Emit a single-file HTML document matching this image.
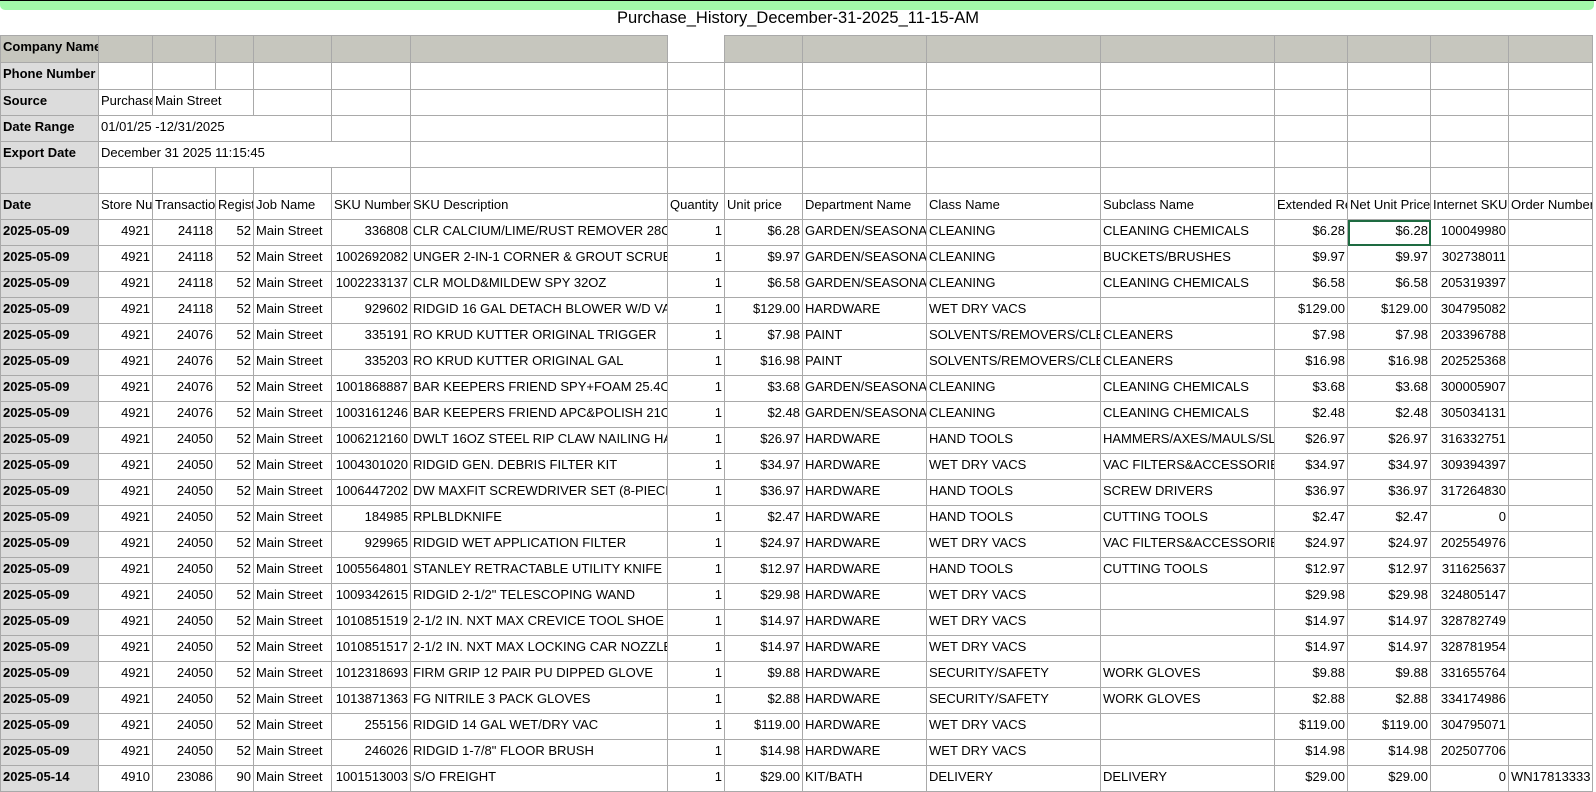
<!DOCTYPE html>
<html><head><meta charset="utf-8"><style>
body{margin:0;width:1596px;height:788px;overflow:hidden;background:#fff;font-family:"Liberation Sans",Arial,sans-serif;position:relative}
.bar{position:absolute;left:0;top:0;width:1596px;height:1px;background:#000}
.green{position:absolute;left:0;top:1px;width:1594px;height:9px;background:#a2f9aa;border-radius:0 0 5px 5px}
.title{position:absolute;left:0;width:1596px;top:9px;text-align:center;font-size:16.5px;color:#000}
table{position:absolute;left:0;top:35px;border-collapse:collapse;table-layout:fixed;width:1593px}
td{border:1px solid #a9a9a9;font-size:13px;padding:0 2px;white-space:nowrap;overflow:hidden;text-overflow:clip;vertical-align:top;line-height:15px;padding-top:3px;box-sizing:border-box;height:26px;color:#000}
td:first-child{background:#dcdcdc;font-weight:bold;border-right:1px dotted #333}
tr.top td{background:#c6c6be;border-bottom:1px dotted #533;height:27px}
tr.top td.gap{background:#fff;border-top:none;border-bottom:1px dotted #533}
tr.h2 td{height:27px}
.r{text-align:right}
.sel{outline:2px solid #1e6b41;outline-offset:-2px;position:relative}
</style></head><body>
<div class="bar"></div><div class="green"></div>
<div class="title">Purchase_History_December-31-2025_11-15-AM</div>
<table>
<colgroup><col style="width:98px"><col style="width:54px"><col style="width:63px"><col style="width:38px"><col style="width:78px"><col style="width:79px"><col style="width:257px"><col style="width:57px"><col style="width:78px"><col style="width:124px"><col style="width:174px"><col style="width:174px"><col style="width:73px"><col style="width:83px"><col style="width:78px"><col style="width:84px"></colgroup>
<tr class="top"><td>Company Name</td><td></td><td></td><td></td><td></td><td></td><td></td><td class="gap"></td><td></td><td></td><td></td><td></td><td></td><td></td><td></td><td></td></tr>
<tr class="h2"><td>Phone Number</td><td></td><td></td><td></td><td></td><td></td><td></td><td></td><td></td><td></td><td></td><td></td><td></td><td></td><td></td><td></td></tr>
<tr><td>Source</td><td>Purchase</td><td colspan="2">Main Street</td><td></td><td></td><td></td><td></td><td></td><td></td><td></td><td></td><td></td><td></td><td></td><td></td></tr>
<tr><td>Date Range</td><td colspan="4">01/01/25 -12/31/2025</td><td></td><td></td><td></td><td></td><td></td><td></td><td></td><td></td><td></td><td></td><td></td></tr>
<tr><td>Export Date</td><td colspan="5">December 31 2025 11:15:45</td><td></td><td></td><td></td><td></td><td></td><td></td><td></td><td></td><td></td><td></td></tr>
<tr><td></td><td></td><td></td><td></td><td></td><td></td><td></td><td></td><td></td><td></td><td></td><td></td><td></td><td></td><td></td><td></td></tr>
<tr><td>Date</td><td>Store Number</td><td>Transaction</td><td>Register</td><td>Job Name</td><td>SKU Number</td><td>SKU Description</td><td>Quantity</td><td>Unit price</td><td>Department Name</td><td>Class Name</td><td>Subclass Name</td><td>Extended Retail</td><td>Net Unit Price</td><td>Internet SKU</td><td>Order Number</td></tr>
<tr><td>2025-05-09</td><td class="r">4921</td><td class="r">24118</td><td class="r">52</td><td>Main Street</td><td class="r">336808</td><td>CLR CALCIUM/LIME/RUST REMOVER 28OZ</td><td class="r">1</td><td class="r">$6.28</td><td>GARDEN/SEASONAL</td><td>CLEANING</td><td>CLEANING CHEMICALS</td><td class="r">$6.28</td><td class="r sel">$6.28</td><td class="r">100049980</td><td></td></tr>
<tr><td>2025-05-09</td><td class="r">4921</td><td class="r">24118</td><td class="r">52</td><td>Main Street</td><td class="r">1002692082</td><td>UNGER 2-IN-1 CORNER &amp; GROUT SCRUBBER</td><td class="r">1</td><td class="r">$9.97</td><td>GARDEN/SEASONAL</td><td>CLEANING</td><td>BUCKETS/BRUSHES</td><td class="r">$9.97</td><td class="r">$9.97</td><td class="r">302738011</td><td></td></tr>
<tr><td>2025-05-09</td><td class="r">4921</td><td class="r">24118</td><td class="r">52</td><td>Main Street</td><td class="r">1002233137</td><td>CLR MOLD&amp;MILDEW SPY 32OZ</td><td class="r">1</td><td class="r">$6.58</td><td>GARDEN/SEASONAL</td><td>CLEANING</td><td>CLEANING CHEMICALS</td><td class="r">$6.58</td><td class="r">$6.58</td><td class="r">205319397</td><td></td></tr>
<tr><td>2025-05-09</td><td class="r">4921</td><td class="r">24118</td><td class="r">52</td><td>Main Street</td><td class="r">929602</td><td>RIDGID 16 GAL DETACH BLOWER W/D VAC</td><td class="r">1</td><td class="r">$129.00</td><td>HARDWARE</td><td>WET DRY VACS</td><td></td><td class="r">$129.00</td><td class="r">$129.00</td><td class="r">304795082</td><td></td></tr>
<tr><td>2025-05-09</td><td class="r">4921</td><td class="r">24076</td><td class="r">52</td><td>Main Street</td><td class="r">335191</td><td>RO KRUD KUTTER ORIGINAL TRIGGER</td><td class="r">1</td><td class="r">$7.98</td><td>PAINT</td><td>SOLVENTS/REMOVERS/CLEANERS</td><td>CLEANERS</td><td class="r">$7.98</td><td class="r">$7.98</td><td class="r">203396788</td><td></td></tr>
<tr><td>2025-05-09</td><td class="r">4921</td><td class="r">24076</td><td class="r">52</td><td>Main Street</td><td class="r">335203</td><td>RO KRUD KUTTER ORIGINAL GAL</td><td class="r">1</td><td class="r">$16.98</td><td>PAINT</td><td>SOLVENTS/REMOVERS/CLEANERS</td><td>CLEANERS</td><td class="r">$16.98</td><td class="r">$16.98</td><td class="r">202525368</td><td></td></tr>
<tr><td>2025-05-09</td><td class="r">4921</td><td class="r">24076</td><td class="r">52</td><td>Main Street</td><td class="r">1001868887</td><td>BAR KEEPERS FRIEND SPY+FOAM 25.4OZ</td><td class="r">1</td><td class="r">$3.68</td><td>GARDEN/SEASONAL</td><td>CLEANING</td><td>CLEANING CHEMICALS</td><td class="r">$3.68</td><td class="r">$3.68</td><td class="r">300005907</td><td></td></tr>
<tr><td>2025-05-09</td><td class="r">4921</td><td class="r">24076</td><td class="r">52</td><td>Main Street</td><td class="r">1003161246</td><td>BAR KEEPERS FRIEND APC&amp;POLISH 21OZ</td><td class="r">1</td><td class="r">$2.48</td><td>GARDEN/SEASONAL</td><td>CLEANING</td><td>CLEANING CHEMICALS</td><td class="r">$2.48</td><td class="r">$2.48</td><td class="r">305034131</td><td></td></tr>
<tr><td>2025-05-09</td><td class="r">4921</td><td class="r">24050</td><td class="r">52</td><td>Main Street</td><td class="r">1006212160</td><td>DWLT 16OZ STEEL RIP CLAW NAILING HAMMER</td><td class="r">1</td><td class="r">$26.97</td><td>HARDWARE</td><td>HAND TOOLS</td><td>HAMMERS/AXES/MAULS/SLEDGES</td><td class="r">$26.97</td><td class="r">$26.97</td><td class="r">316332751</td><td></td></tr>
<tr><td>2025-05-09</td><td class="r">4921</td><td class="r">24050</td><td class="r">52</td><td>Main Street</td><td class="r">1004301020</td><td>RIDGID GEN. DEBRIS FILTER KIT</td><td class="r">1</td><td class="r">$34.97</td><td>HARDWARE</td><td>WET DRY VACS</td><td>VAC FILTERS&amp;ACCESSORIES</td><td class="r">$34.97</td><td class="r">$34.97</td><td class="r">309394397</td><td></td></tr>
<tr><td>2025-05-09</td><td class="r">4921</td><td class="r">24050</td><td class="r">52</td><td>Main Street</td><td class="r">1006447202</td><td>DW MAXFIT SCREWDRIVER SET (8-PIECE)</td><td class="r">1</td><td class="r">$36.97</td><td>HARDWARE</td><td>HAND TOOLS</td><td>SCREW DRIVERS</td><td class="r">$36.97</td><td class="r">$36.97</td><td class="r">317264830</td><td></td></tr>
<tr><td>2025-05-09</td><td class="r">4921</td><td class="r">24050</td><td class="r">52</td><td>Main Street</td><td class="r">184985</td><td>RPLBLDKNIFE</td><td class="r">1</td><td class="r">$2.47</td><td>HARDWARE</td><td>HAND TOOLS</td><td>CUTTING TOOLS</td><td class="r">$2.47</td><td class="r">$2.47</td><td class="r">0</td><td></td></tr>
<tr><td>2025-05-09</td><td class="r">4921</td><td class="r">24050</td><td class="r">52</td><td>Main Street</td><td class="r">929965</td><td>RIDGID WET APPLICATION FILTER</td><td class="r">1</td><td class="r">$24.97</td><td>HARDWARE</td><td>WET DRY VACS</td><td>VAC FILTERS&amp;ACCESSORIES</td><td class="r">$24.97</td><td class="r">$24.97</td><td class="r">202554976</td><td></td></tr>
<tr><td>2025-05-09</td><td class="r">4921</td><td class="r">24050</td><td class="r">52</td><td>Main Street</td><td class="r">1005564801</td><td>STANLEY RETRACTABLE UTILITY KNIFE</td><td class="r">1</td><td class="r">$12.97</td><td>HARDWARE</td><td>HAND TOOLS</td><td>CUTTING TOOLS</td><td class="r">$12.97</td><td class="r">$12.97</td><td class="r">311625637</td><td></td></tr>
<tr><td>2025-05-09</td><td class="r">4921</td><td class="r">24050</td><td class="r">52</td><td>Main Street</td><td class="r">1009342615</td><td>RIDGID 2-1/2" TELESCOPING WAND</td><td class="r">1</td><td class="r">$29.98</td><td>HARDWARE</td><td>WET DRY VACS</td><td></td><td class="r">$29.98</td><td class="r">$29.98</td><td class="r">324805147</td><td></td></tr>
<tr><td>2025-05-09</td><td class="r">4921</td><td class="r">24050</td><td class="r">52</td><td>Main Street</td><td class="r">1010851519</td><td>2-1/2 IN. NXT MAX CREVICE TOOL SHOE</td><td class="r">1</td><td class="r">$14.97</td><td>HARDWARE</td><td>WET DRY VACS</td><td></td><td class="r">$14.97</td><td class="r">$14.97</td><td class="r">328782749</td><td></td></tr>
<tr><td>2025-05-09</td><td class="r">4921</td><td class="r">24050</td><td class="r">52</td><td>Main Street</td><td class="r">1010851517</td><td>2-1/2 IN. NXT MAX LOCKING CAR NOZZLE</td><td class="r">1</td><td class="r">$14.97</td><td>HARDWARE</td><td>WET DRY VACS</td><td></td><td class="r">$14.97</td><td class="r">$14.97</td><td class="r">328781954</td><td></td></tr>
<tr><td>2025-05-09</td><td class="r">4921</td><td class="r">24050</td><td class="r">52</td><td>Main Street</td><td class="r">1012318693</td><td>FIRM GRIP 12 PAIR PU DIPPED GLOVE</td><td class="r">1</td><td class="r">$9.88</td><td>HARDWARE</td><td>SECURITY/SAFETY</td><td>WORK GLOVES</td><td class="r">$9.88</td><td class="r">$9.88</td><td class="r">331655764</td><td></td></tr>
<tr><td>2025-05-09</td><td class="r">4921</td><td class="r">24050</td><td class="r">52</td><td>Main Street</td><td class="r">1013871363</td><td>FG NITRILE 3 PACK GLOVES</td><td class="r">1</td><td class="r">$2.88</td><td>HARDWARE</td><td>SECURITY/SAFETY</td><td>WORK GLOVES</td><td class="r">$2.88</td><td class="r">$2.88</td><td class="r">334174986</td><td></td></tr>
<tr><td>2025-05-09</td><td class="r">4921</td><td class="r">24050</td><td class="r">52</td><td>Main Street</td><td class="r">255156</td><td>RIDGID 14 GAL WET/DRY VAC</td><td class="r">1</td><td class="r">$119.00</td><td>HARDWARE</td><td>WET DRY VACS</td><td></td><td class="r">$119.00</td><td class="r">$119.00</td><td class="r">304795071</td><td></td></tr>
<tr><td>2025-05-09</td><td class="r">4921</td><td class="r">24050</td><td class="r">52</td><td>Main Street</td><td class="r">246026</td><td>RIDGID 1-7/8" FLOOR BRUSH</td><td class="r">1</td><td class="r">$14.98</td><td>HARDWARE</td><td>WET DRY VACS</td><td></td><td class="r">$14.98</td><td class="r">$14.98</td><td class="r">202507706</td><td></td></tr>
<tr><td>2025-05-14</td><td class="r">4910</td><td class="r">23086</td><td class="r">90</td><td>Main Street</td><td class="r">1001513003</td><td>S/O FREIGHT</td><td class="r">1</td><td class="r">$29.00</td><td>KIT/BATH</td><td>DELIVERY</td><td>DELIVERY</td><td class="r">$29.00</td><td class="r">$29.00</td><td class="r">0</td><td>WN17813333</td></tr>
</table>
</body></html>
